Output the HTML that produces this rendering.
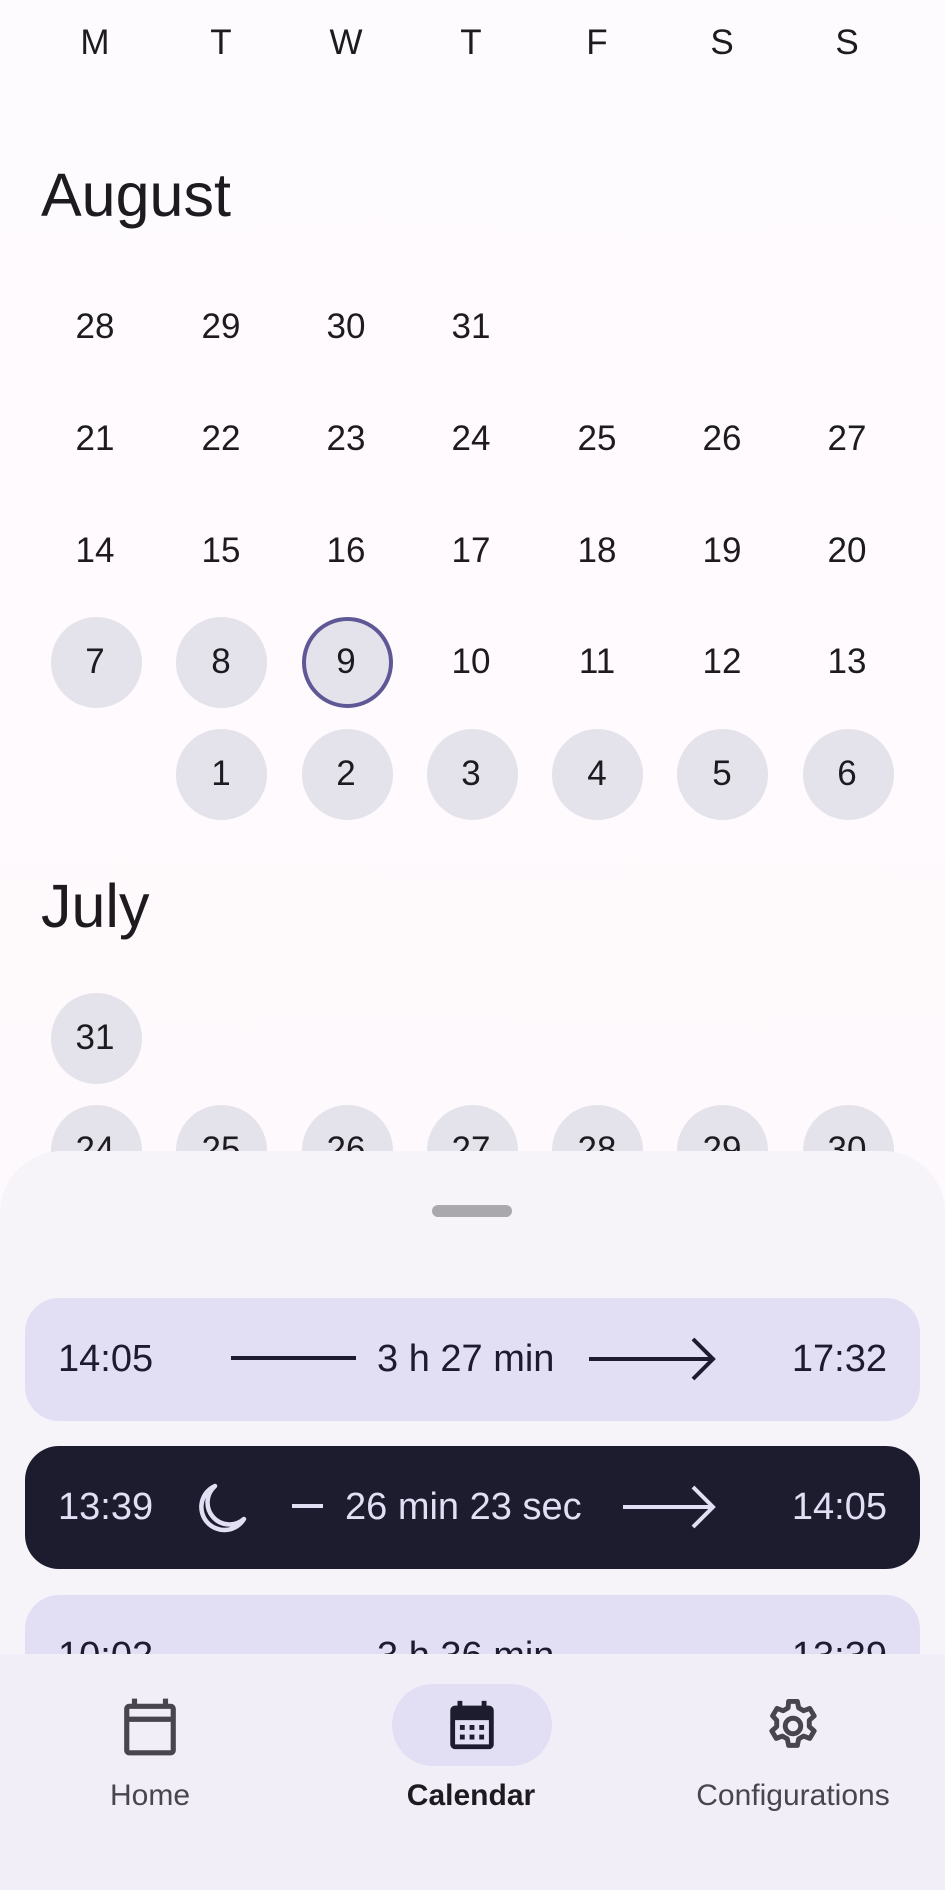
<!DOCTYPE html>
<html><head><meta charset="utf-8"><style>
*{margin:0;padding:0;box-sizing:border-box}
html,body{width:945px;height:1890px;overflow:hidden}
body{position:relative;font-family:"Liberation Sans",sans-serif;background:linear-gradient(#fefbfe,#fdf8fb);color:#1d1b20}
.t{position:absolute;width:100px;margin-left:-50px;text-align:center;font-size:35px;line-height:40px;height:40px}
.c{position:absolute;width:91px;height:91px;margin-left:-45.5px;margin-top:-45.5px;border-radius:50%;background:#e4e2ea}
.h{position:absolute;left:41px;font-size:61px;line-height:70px}
.sheet{position:absolute;left:0;top:1151px;width:945px;height:739px;background:#f6f4f8;border-radius:62px 62px 0 0;overflow:hidden}
.card{position:absolute;left:25px;width:895px;height:123px;border-radius:34px;background:#e2dff5;font-size:38px;color:#1d1b2e}
.card span{position:absolute;top:0;line-height:123px}
.nav{position:absolute;left:0;top:1654px;width:945px;height:236px;background:#f2eef8}
.lbl{position:absolute;top:1776px;width:300px;margin-left:-150px;text-align:center;font-size:30px;color:#49454f;line-height:40px}
</style></head><body>
<div class="t" style="left:95px;top:23px">M</div>
<div class="t" style="left:221px;top:23px">T</div>
<div class="t" style="left:346px;top:23px">W</div>
<div class="t" style="left:471px;top:23px">T</div>
<div class="t" style="left:597px;top:23px">F</div>
<div class="t" style="left:722px;top:23px">S</div>
<div class="t" style="left:847px;top:23px">S</div>

<div class="h" style="top:160px">August</div>

<div class="t" style="left:95px;top:307px">28</div>
<div class="t" style="left:221px;top:307px">29</div>
<div class="t" style="left:346px;top:307px">30</div>
<div class="t" style="left:471px;top:307px">31</div>

<div class="t" style="left:95px;top:419px">21</div>
<div class="t" style="left:221px;top:419px">22</div>
<div class="t" style="left:346px;top:419px">23</div>
<div class="t" style="left:471px;top:419px">24</div>
<div class="t" style="left:597px;top:419px">25</div>
<div class="t" style="left:722px;top:419px">26</div>
<div class="t" style="left:847px;top:419px">27</div>

<div class="t" style="left:95px;top:531px">14</div>
<div class="t" style="left:221px;top:531px">15</div>
<div class="t" style="left:346px;top:531px">16</div>
<div class="t" style="left:471px;top:531px">17</div>
<div class="t" style="left:597px;top:531px">18</div>
<div class="t" style="left:722px;top:531px">19</div>
<div class="t" style="left:847px;top:531px">20</div>

<div class="c" style="left:96px;top:662px"></div>
<div class="c" style="left:221px;top:662px"></div>
<div class="c" style="left:347px;top:662px;border:4px solid #5f5896"></div>
<div class="t" style="left:95px;top:642px">7</div>
<div class="t" style="left:221px;top:642px">8</div>
<div class="t" style="left:346px;top:642px">9</div>
<div class="t" style="left:471px;top:642px">10</div>
<div class="t" style="left:597px;top:642px">11</div>
<div class="t" style="left:722px;top:642px">12</div>
<div class="t" style="left:847px;top:642px">13</div>

<div class="c" style="left:221px;top:774px"></div>
<div class="c" style="left:347px;top:774px"></div>
<div class="c" style="left:472px;top:774px"></div>
<div class="c" style="left:597px;top:774px"></div>
<div class="c" style="left:722px;top:774px"></div>
<div class="c" style="left:848px;top:774px"></div>
<div class="t" style="left:221px;top:754px">1</div>
<div class="t" style="left:346px;top:754px">2</div>
<div class="t" style="left:471px;top:754px">3</div>
<div class="t" style="left:597px;top:754px">4</div>
<div class="t" style="left:722px;top:754px">5</div>
<div class="t" style="left:847px;top:754px">6</div>

<div class="h" style="top:871px">July</div>

<div class="c" style="left:96px;top:1038px"></div>
<div class="t" style="left:95px;top:1018px">31</div>

<div class="c" style="left:96px;top:1150px"></div>
<div class="c" style="left:221px;top:1150px"></div>
<div class="c" style="left:347px;top:1150px"></div>
<div class="c" style="left:472px;top:1150px"></div>
<div class="c" style="left:597px;top:1150px"></div>
<div class="c" style="left:722px;top:1150px"></div>
<div class="c" style="left:848px;top:1150px"></div>
<div class="t" style="left:95px;top:1130px">24</div>
<div class="t" style="left:221px;top:1130px">25</div>
<div class="t" style="left:346px;top:1130px">26</div>
<div class="t" style="left:471px;top:1130px">27</div>
<div class="t" style="left:597px;top:1130px">28</div>
<div class="t" style="left:722px;top:1130px">29</div>
<div class="t" style="left:847px;top:1130px">30</div>

<div class="sheet"></div>
<div style="position:absolute;left:432px;top:1205px;width:80px;height:12px;border-radius:6px;background:#a9a8ad"></div>

<div class="card" style="top:1298px">
<span style="left:33px">14:05</span>
<div style="position:absolute;left:206px;top:58px;width:125px;height:4px;background:#1d1b2e"></div>
<span style="left:352px">3 h 27 min</span>
<svg style="position:absolute;left:564px;top:38px" width="130" height="46" viewBox="0 0 130 46"><path d="M0 23H124M104 3L124 23L104 43" fill="none" stroke="#1d1b2e" stroke-width="4"/></svg>
<span style="right:33px">17:32</span>
</div>

<div class="card" style="top:1446px;background:#1d1b2e;color:#e2dff5">
<span style="left:33px">13:39</span>
<svg style="position:absolute;left:168px;top:36px" width="56" height="54" viewBox="0 0 56 54"><path d="M22 4A23 23 0 1 0 51 37A19 19 0 0 1 22 4Z" fill="none" stroke="#e2dff5" stroke-width="4.5" stroke-linejoin="round"/></svg>
<div style="position:absolute;left:267px;top:58px;width:31px;height:4px;background:#e2dff5"></div>
<span style="left:320px">26 min 23 sec</span>
<svg style="position:absolute;left:598px;top:38px" width="96" height="46" viewBox="0 0 96 46"><path d="M0 23H90M70 3L90 23L70 43" fill="none" stroke="#e2dff5" stroke-width="4"/></svg>
<span style="right:33px">14:05</span>
</div>

<div class="card" style="top:1595px">
<span style="left:33px">10:02</span>
<span style="left:352px">3 h 36 min</span>
<span style="right:33px">13:39</span>
</div>

<div class="nav"></div>
<div style="position:absolute;left:392px;top:1684px;width:160px;height:82px;border-radius:41px;background:#e2dff5"></div>
<svg style="position:absolute;left:119px;top:1696px" width="62" height="62" viewBox="0 0 24 24"><path fill="#49454f" d="M20 3h-1V1h-2v2H7V1H5v2H4c-1.1 0-2 .9-2 2v16c0 1.1.9 2 2 2h16c1.1 0 2-.9 2-2V5c0-1.1-.9-2-2-2zm0 18H4V10h16v11zm0-13H4V5h16v3z"/></svg>
<svg style="position:absolute;left:443px;top:1696px" width="58" height="58" viewBox="0 0 24 24"><path fill="#1d1b2e" d="M19 4h-1V2h-2v2H8V2H6v2H5c-1.11 0-1.99.9-1.99 2L3 20a2 2 0 002 2h14c1.1 0 2-.9 2-2V6c0-1.1-.9-2-2-2zm0 16H5V10h14v10zM9 14H7v-2h2v2zm4 0h-2v-2h2v2zm4 0h-2v-2h2v2zm-8 4H7v-2h2v2zm4 0h-2v-2h2v2zm4 0h-2v-2h2v2z"/></svg>
<svg style="position:absolute;left:762px;top:1695px" width="62" height="62" viewBox="0 0 24 24"><path fill="none" stroke="#49454f" stroke-width="1.9" stroke-linejoin="round" d="M10.3 2.5h3.4l.5 2.5 1.9 1.1 2.4-.9 1.7 2.9-1.9 1.7v2.4l1.9 1.7-1.7 2.9-2.4-.9-1.9 1.1-.5 2.5h-3.4l-.5-2.5-1.9-1.1-2.4.9-1.7-2.9 1.9-1.7v-2.4L4.1 8.1l1.7-2.9 2.4.9 1.9-1.1z"/><circle cx="12" cy="12" r="3" fill="none" stroke="#49454f" stroke-width="1.9"/></svg>
<div class="lbl" style="left:150px">Home</div>
<div class="lbl" style="left:471px;font-weight:bold;color:#1d1b20">Calendar</div>
<div class="lbl" style="left:793px">Configurations</div>
</body></html>
